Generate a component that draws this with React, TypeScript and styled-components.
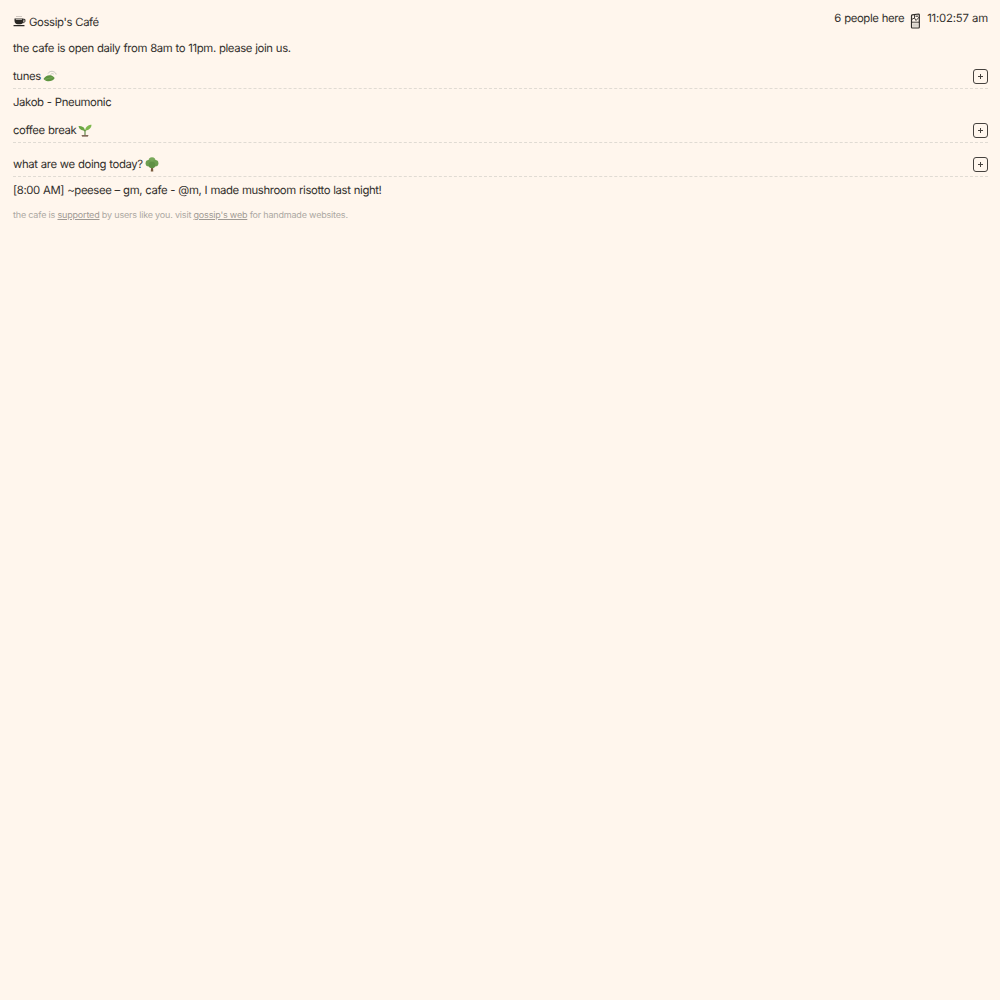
import React from "react";
import styled, { createGlobalStyle } from "styled-components";

const GlobalStyle = createGlobalStyle`
  html, body {
    margin: 0;
    padding: 0;
    background: #fff6ed;
  }
  body {
    font-family: Inter, "Liberation Sans", sans-serif;
    font-size: 11.35px;
    letter-spacing: -0.39px;
    word-spacing: 0.4px;
    line-height: 16px;
    text-rendering: geometricPrecision;
    color: #33302c;
  }
`;

const Page = styled("div")`
  padding: 10px 12px 0 13px;
  min-height: 990px;
  background: #fff6ed;
`;

const Header = styled("header")`
  display: flex;
  justify-content: space-between;
  align-items: flex-start;
  height: 20px;
`;

const Brand = styled("h1")`
  display: flex;
  align-items: center;
  gap: 3px;
  margin: 4px 0 0;
  font-size: 11.35px;
  font-weight: 400;
  line-height: 16px;
`;

const Status = styled("div")`
  display: flex;
  align-items: flex-start;
  gap: 6px;
`;

const Clock = styled("span")`
  letter-spacing: -0.2px;
`;

const GlassSvg = styled("svg")`
  margin-top: 3px;
`;

const Note = styled("p")`
  margin: 10px 0 0;
`;

const Section = styled("div")<{ $gap: number }>`
  display: flex;
  justify-content: space-between;
  align-items: flex-end;
  height: 21px;
  margin-top: ${(p) => p.$gap}px;
  padding-bottom: 3px;
  border-bottom: 1px dashed #e0dbd3;
  box-sizing: content-box;
`;

const SectionTitle = styled("span")`
  display: flex;
  align-items: center;
  gap: 2px;
  height: 16px;
  margin-bottom: 1px;
`;

const AddButton = styled("button")`
  display: flex;
  align-items: center;
  justify-content: center;
  width: 15px;
  height: 15px;
  padding: 0;
  margin-bottom: 1px;
  background: transparent;
  border: 1px solid #46423e;
  border-radius: 3px;
`;

const Line = styled("p")`
  margin: 5px 0 0;
`;

const Footer = styled("footer")`
  margin-top: 10px;
  font-size: 9px;
  line-height: 16px;
  letter-spacing: -0.18px;
  word-spacing: 0;
  color: #aca8a2;
`;

const FooterLink = styled("a")`
  color: #9f9a94;
  text-decoration: underline;
`;

const CupIcon = () => (
  <svg width="13" height="13" viewBox="0 1 13 13" fill="none">
    <path d="M4 0.500v1.500M6 0.500v1.500M8 0.500v1.500" stroke="#8b8782" strokeWidth="0.8" />
    <path d="M1.500 3.600h9v2.200c0 2-1.400 3.400-3.200 3.400H4.700C2.900 9.200 1.500 7.800 1.500 5.800z" fill="#2a2724" />
    <path d="M10.400 4.400h1.500v2c0 .8-1 1.200-2.200 1.400" stroke="#2a2724" strokeWidth="1" />
    <path d="M1 10.700h10" stroke="#2a2724" strokeWidth="1.200" strokeLinecap="round" />
    <path d="M2.800 4.400h6.200" stroke="#f5efe6" strokeWidth="0.7" />
  </svg>
);

const GlassIcon = () => (
  <GlassSvg width="11" height="16" viewBox="0 0 11 16" fill="none">
    <path d="M1.500 6.500V2.800C1.500 2.300 1.800 2 2.300 1.900L8.500 1c.5 0 .8.300.8.800v12.400c0 .5-.3.800-.8.800H2.300c-.5 0-.8-.3-.8-.8z" stroke="#2f2c29" strokeWidth="1.200" fill="#fff6ed" />
    <path d="M1.500 9.200h7.800M1.500 6.500l3-1.500V1.800M4.500 5l1.500 2.500 3.300-3.500" stroke="#2f2c29" strokeWidth="0.9" />
    <path d="M2.800 10.300h5.300v3.500H2.800z" fill="#d8d3cb" />
    <path d="M5.500 2.500h2.600v1.500H5.500z" fill="#6d6964" />
  </GlassSvg>
);

const TeaLeafIcon = () => (
  <svg width="14" height="12" viewBox="0 0 14 12" fill="none">
    <path d="M5 3.500C6.500 1 10 .5 12.500 3c.4.500.6 1 .6 1.500" stroke="#c4c5bd" strokeWidth="1" />
    <path d="M7.500 4.500c.8-1 2.300-1.200 3.300-.3" stroke="#cfd0c8" strokeWidth="1" />
    <path d="M0.500 9C2 5.800 5.500 4.600 8.500 5.400c1.200.4 2.200 1.500 3.200 2.600-1.200 2.400-4.200 3.500-7 3.200C3 11 1.600 10 0.500 9z" fill="#5e9440" />
    <path d="M2 9.400c2.500-.800 5-1.500 7.500-1.800" stroke="#86b566" strokeWidth="0.6" />
  </svg>
);

const SeedlingIcon = () => (
  <svg width="14" height="13" viewBox="0 0 14 13" fill="none">
    <path d="M7 7.500c0-2-.5-3.500-2-4.500C3.500 2 2 1.800.5 2c.3 2 1.300 3.300 3 4 1.200.5 2.300.6 3.500 1.500z" fill="#6ba544" />
    <path d="M7 7.500c0-2.500 1-4.500 3-5.700C11 1.200 12.500.800 13.500.800c0 2.200-1 3.700-2.700 4.600-1.300.7-2.700.8-3.800 2.100z" fill="#7fb84e" />
    <path d="M7 6v5" stroke="#55803a" strokeWidth="1.100" />
    <path d="M3.500 11.300h7l-.6 1.200H4.100z" fill="#5a3a2a" />
  </svg>
);

const TreeIcon = () => (
  <svg width="14" height="15" viewBox="0 0 14 15" fill="none">
    <path d="M6.200 9h1.700L8.300 14.500H5.800z" fill="#7a5a3c" />
    <circle cx="7" cy="3.800" r="3.500" fill="#78a85a" />
    <circle cx="3.800" cy="6.300" r="3.200" fill="#6c9e50" />
    <circle cx="10.200" cy="6.300" r="3.200" fill="#6c9e50" />
    <circle cx="7" cy="8" r="3.300" fill="#5f9145" />
  </svg>
);

const PlusButton = () => (
  <AddButton aria-label="expand">
    <svg width="5" height="5" viewBox="0 0 5 5">
      <path d="M2.500 0v5M0 2.500h5" stroke="#46423e" strokeWidth="1" />
    </svg>
  </AddButton>
);

export default function App() {
  return (
    <>
      <GlobalStyle />
      <Page>
        <Header>
          <Brand>
            <CupIcon />
            Gossip's Café
          </Brand>
          <Status>
            <span>6 people here</span>
            <GlassIcon />
            <Clock>11:02:57 am</Clock>
          </Status>
        </Header>
        <Note>the cafe is open daily from 8am to 11pm. please join us.</Note>
        <Section $gap={8}>
          <SectionTitle>
            tunes <TeaLeafIcon />
          </SectionTitle>
          <PlusButton />
        </Section>
        <Line>Jakob - Pneumonic</Line>
        <Section $gap={8}>
          <SectionTitle>
            coffee break <SeedlingIcon />
          </SectionTitle>
          <PlusButton />
        </Section>
        <Section $gap={9}>
          <SectionTitle>
            what are we doing today? <TreeIcon />
          </SectionTitle>
          <PlusButton />
        </Section>
        <Line>[8:00 AM] ~peesee – gm, cafe - @m, I made mushroom risotto last night!</Line>
        <Footer>
          the cafe is <FooterLink>supported</FooterLink> by users like you. visit{" "}
          <FooterLink>gossip's web</FooterLink> for handmade websites.
        </Footer>
      </Page>
    </>
  );
}
